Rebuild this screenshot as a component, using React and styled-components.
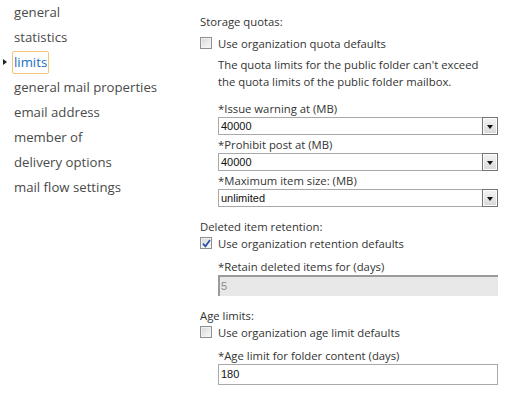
import React from "react";
import styled, { createGlobalStyle } from "styled-components";

const Global = createGlobalStyle`
  html, body { margin: 0; padding: 0; background: #fff; }
  body { font-family: "Open Sans", "Noto Sans", sans-serif; color: #333; }
  *, *::before, *::after { box-sizing: border-box; }
`;

const Page = styled.div`
  display: flex;
  width: 512px;
  height: 401px;
  overflow: hidden;
`;

const Nav = styled.ul`
  list-style: none;
  margin: 0;
  padding: 0;
  width: 200px;
  flex: none;
`;

const NavItem = styled.li`
  position: relative;
  height: 25px;
  display: flex;
  align-items: center;
  padding-left: 12px;
  font-size: 13.2px;
  color: ${(p) => (p.$active ? "#1a6fc4" : "#4a4a4a")};
`;

const NavLabel = styled.span`
  display: inline-block;
  height: 23px;
  line-height: 21px;
  padding: 0 1px;
  border: 1px solid ${(p) => (p.$active ? "#f3c574" : "transparent")};
  border-radius: 2px;
`;

const Caret = styled.span`
  position: absolute;
  left: 3px;
  top: 50%;
  margin-top: -3.5px;
  width: 0;
  height: 0;
  border-top: 3.5px solid transparent;
  border-bottom: 3.5px solid transparent;
  border-left: 4px solid #222;
`;

const Panel = styled.div`
  flex: 1;
  padding-top: 14px;
  font-size: 11.3px;
  color: #333;
`;

const Section = styled.div`
  margin-bottom: ${(p) => p.$mb || 0}px;
`;

const Heading = styled.div`
  line-height: 16px;
  height: 16px;
`;

const CheckRow = styled.label`
  display: flex;
  align-items: center;
  height: 16px;
  margin-top: ${(p) => p.$mt || 0}px;
  gap: 6px;
`;

const Box = styled.span`
  width: 12px;
  height: 12px;
  border: 1px solid #8e8f8f;
  background: linear-gradient(135deg, #d6d6d6, #fbfbfb);
  box-shadow: inset 0 0 0 1px #f2f2f2;
  display: flex;
  align-items: center;
  justify-content: center;
  flex: none;
`;

const Indent = styled.div`
  padding-left: 18px;
  width: 298px;
`;

const Note = styled.p`
  margin: 5px 0 9px 0;
  line-height: 17px;
`;

const FieldLabel = styled.div`
  height: 18px;
  padding-top: 2px;
  line-height: 16px;
  margin-top: ${(p) => p.$mt || 0}px;
`;

const Select = styled.div`
  display: flex;
  align-items: stretch;
  height: 18px;
  border: 1px solid #a9a9a9;
  background: #fff;
`;

const SelectValue = styled.span`
  flex: 1;
  padding-left: 2px;
  line-height: 16px;
  color: #111;
  font-family: "Liberation Sans", Arial, sans-serif;
  font-size: 11px;
`;

const SelectButton = styled.span`
  width: 16px;
  border: 1px solid #747474;
  margin: -1px -1px -1px 0;
  background: linear-gradient(#f4f4f4, #d8d8d8);
  box-shadow: inset 0 0 0 1px #fcfcfc;
  display: flex;
  align-items: center;
  justify-content: center;
  &::after {
    content: "";
    border-left: 3.5px solid transparent;
    border-right: 3.5px solid transparent;
    border-top: 4px solid #111;
    margin-top: 2px;
  }
`;

const TextInput = styled.div`
  height: 21px;
  border-style: solid;
  border-color: ${(p) => (p.$disabled ? "#9a9a9a" : "#a9a9a9")};
  border-width: ${(p) => (p.$disabled ? "2px 0 0 2px" : "1px")};
  background: ${(p) => (p.$disabled ? "#e8e8e8" : "#fff")};
  padding-left: ${(p) => (p.$disabled ? "1px" : "2px")};
  line-height: ${(p) => (p.$disabled ? "18px" : "19px")};
  color: ${(p) => (p.$disabled ? "#8c8c8c" : "#111")};
  font-family: "Liberation Sans", Arial, sans-serif;
  font-size: 11px;
`;

function Check({ checked }) {
  return (
    <Box>
      {checked && (
        <svg width="9" height="9" viewBox="0 0 9 9">
          <path d="M1 4.6 L3.4 7.3 L8 1" fill="none" stroke="#2b4ea6" strokeWidth="1.7" />
        </svg>
      )}
    </Box>
  );
}

function Dropdown({ value }) {
  return (
    <Select>
      <SelectValue>{value}</SelectValue>
      <SelectButton />
    </Select>
  );
}

const navItems = [
  "general",
  "statistics",
  "limits",
  "general mail properties",
  "email address",
  "member of",
  "delivery options",
  "mail flow settings",
];

export default function App() {
  return (
    <>
      <Global />
      <Page>
        <Nav>
          {navItems.map((n) => (
            <NavItem key={n} $active={n === "limits"}>
              {n === "limits" && <Caret />}
              <NavLabel $active={n === "limits"}>{n}</NavLabel>
            </NavItem>
          ))}
        </Nav>
        <Panel>
          <Section $mb={12}>
            <Heading>Storage quotas:</Heading>
            <CheckRow $mt={5}>
              <Check />
              Use organization quota defaults
            </CheckRow>
            <Indent>
              <Note>
                The quota limits for the public folder can't exceed
                <br />
                the quota limits of the public folder mailbox.
              </Note>
              <FieldLabel>*Issue warning at (MB)</FieldLabel>
              <Dropdown value="40000" />
              <FieldLabel>*Prohibit post at (MB)</FieldLabel>
              <Dropdown value="40000" />
              <FieldLabel>*Maximum item size: (MB)</FieldLabel>
              <Dropdown value="unlimited" />
            </Indent>
          </Section>
          <Section $mb={12}>
            <Heading>Deleted item retention:</Heading>
            <CheckRow>
              <Check checked />
              Use organization retention defaults
            </CheckRow>
            <Indent>
              <FieldLabel $mt={6}>*Retain deleted items for (days)</FieldLabel>
              <TextInput $disabled>5</TextInput>
            </Indent>
          </Section>
          <Section>
            <Heading>Age limits:</Heading>
            <CheckRow>
              <Check />
              Use organization age limit defaults
            </CheckRow>
            <Indent>
              <FieldLabel $mt={6}>*Age limit for folder content (days)</FieldLabel>
              <TextInput>180</TextInput>
            </Indent>
          </Section>
        </Panel>
      </Page>
    </>
  );
}
